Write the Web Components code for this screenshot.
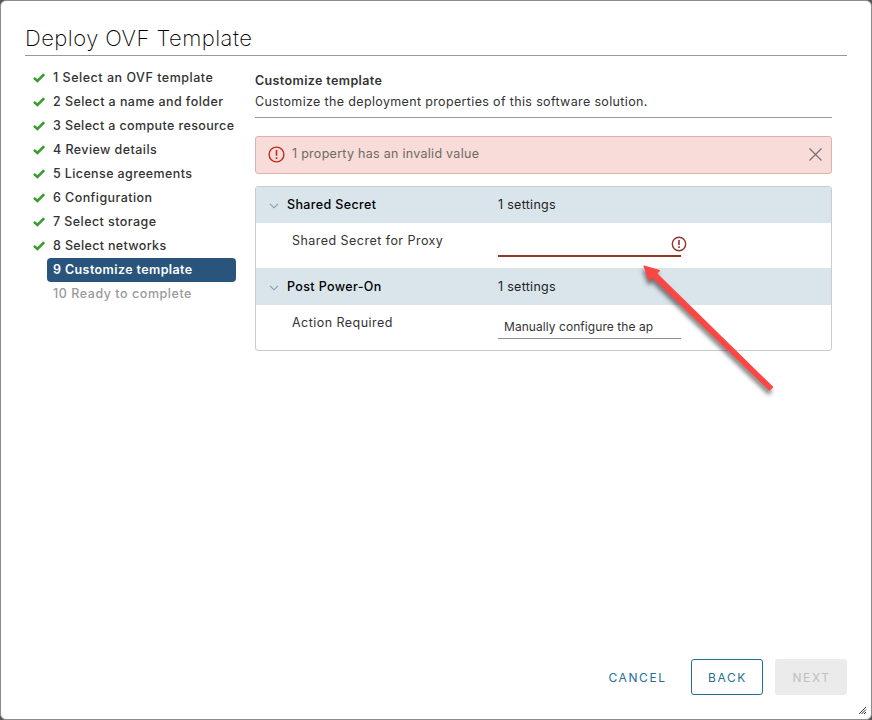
<!DOCTYPE html>
<html lang="en">
<head>
<meta charset="utf-8">
<title>Deploy OVF Template</title>
<style>
  html, body { margin: 0; height: 100%; }
  body {
    background: #555;
    color: #333;
    font: 12.5px/24px Inter, "Open Sans", sans-serif;
    overflow: hidden;
  }
</style>
</head>
<body>
<wizard-dialog heading="Deploy OVF Template">
  <wizard-step slot="steps" state="done" style="letter-spacing: .52px">1 Select an OVF template</wizard-step>
  <wizard-step slot="steps" state="done">2 Select a name and folder</wizard-step>
  <wizard-step slot="steps" state="done" style="letter-spacing: .38px">3 Select a compute resource</wizard-step>
  <wizard-step slot="steps" state="done">4 Review details</wizard-step>
  <wizard-step slot="steps" state="done" style="letter-spacing: .38px">5 License agreements</wizard-step>
  <wizard-step slot="steps" state="done">6 Configuration</wizard-step>
  <wizard-step slot="steps" state="done">7 Select storage</wizard-step>
  <wizard-step slot="steps" state="done" style="letter-spacing: .34px">8 Select networks</wizard-step>
  <wizard-step slot="steps" state="active" style="letter-spacing: .4px">9 Customize template</wizard-step>
  <wizard-step slot="steps" state="disabled" style="letter-spacing: .55px">10 Ready to complete</wizard-step>

  <page-header heading="Customize template">Customize the deployment properties of this software solution.</page-header>
  <alert-banner>1 property has an invalid value</alert-banner>
  <property-table>
    <property-section name="Shared Secret" count="1 settings">
      <property-row label="Shared Secret for Proxy" invalid></property-row>
    </property-section>
    <property-section name="Post Power-On" count="1 settings">
      <property-row label="Action Required">Manually configure the ap</property-row>
    </property-section>
  </property-table>

  <wizard-button slot="actions" kind="link">CANCEL</wizard-button>
  <wizard-button slot="actions" kind="outline">BACK</wizard-button>
  <wizard-button slot="actions" kind="disabled">NEXT</wizard-button>
</wizard-dialog>
<pointer-arrow></pointer-arrow>

<script>
function define(name, render) {
  customElements.define(name, class extends HTMLElement {
    constructor() {
      super();
      this.attachShadow({ mode: "open" });
    }

    connectedCallback() {
      this.shadowRoot.innerHTML = render(this);
    }
  });
}

define("wizard-dialog", (el) => `
  <style>
    :host {
      display: flex;
      flex-direction: column;
      box-sizing: border-box;
      width: 872px;
      height: 720px;
      padding: 22px 24px 24px;
      background: #fff;
      border: 1px solid #8c8c8c;
      border-radius: 6px;
    }
    h1 {
      margin: 0;
      height: 32px;
      border-bottom: 1px solid #9a9a9a;
      font-size: 22px;
      font-weight: 200;
      line-height: 30px;
      letter-spacing: .46px;
      color: #000;
    }
    .content { display: flex; flex: 1; }
    nav { width: 211px; padding-top: 10px; }
    main { width: 577px; margin-left: 19px; padding-top: 16px; }
    footer { display: flex; justify-content: flex-end; gap: 12px; }
    .grip { position: absolute; left: 858px; top: 706px; }
  </style>
  <h1>${el.getAttribute("heading")}</h1>
  <div class="content">
    <nav><slot name="steps"></slot></nav>
    <main><slot></slot></main>
  </div>
  <footer><slot name="actions"></slot></footer>
  <svg class="grip" width="9" height="9" viewBox="0 0 9 9" stroke="#333" stroke-width="1">
    <path d="M1 8 8 1M3.500 8 8 3.500M6 8l2-2"/>
  </svg>
`);

define("wizard-step", () => `
  <style>
    :host {
      display: grid;
      grid-template-columns: 22px 189px;
      align-items: center;
      height: 24px;
      font-weight: 500;
      letter-spacing: .43px;
      white-space: nowrap;
    }
    svg { display: none; margin-left: 8px; }
    :host([state="done"]) svg { display: block; }
    .label {
      grid-column: 2;
      box-sizing: border-box;
      height: 24px;
      padding-left: 6px;
      border-radius: 4px;
      line-height: 23px;
    }
    :host([state="active"]) .label { background: #29547b; color: #fff; font-weight: 600; }
    :host([state="disabled"]) .label { color: #9a9a9a; }
  </style>
  <svg width="12" height="10" viewBox="0 0 12 10" fill="none" stroke="#3c9a30" stroke-width="2.600">
    <path d="M.9 4.900 4.400 8 11.200 1.300"/>
  </svg>
  <span class="label"><slot></slot></span>
`);

define("page-header", (el) => `
  <style>
    :host { display: block; height: 45px; border-bottom: 1px solid #9a9a9a; }
    h2 { margin: 0; font-size: 12.5px; font-weight: 600; line-height: 18px; letter-spacing: .38px; }
    p { margin: 3px 0 0; line-height: 18px; letter-spacing: .35px; white-space: nowrap; }
  </style>
  <h2>${el.getAttribute("heading")}</h2>
  <p><slot></slot></p>
`);

define("alert-banner", () => `
  <style>
    :host {
      display: flex;
      align-items: center;
      box-sizing: border-box;
      height: 38px;
      margin-top: 18px;
      padding: 0 8px 0 12px;
      background: #f7dcd9;
      border: 1px solid #e0b2ab;
      border-radius: 3px;
      color: #6f6a64;
    }
    svg { margin-top: -2px; }
    .text { flex: 1; margin: -3px 0 0 7px; letter-spacing: .28px; }
  </style>
  <svg width="17" height="17" viewBox="0 0 17 17" fill="none" stroke="#c02b1d" stroke-width="1.400">
    <circle cx="8.500" cy="8.500" r="7.400"/><path d="M8.500 4v5.800M8.500 11.200v1.900" stroke-width="1.600"/>
  </svg>
  <span class="text"><slot></slot></span>
  <svg width="15" height="15" viewBox="0 0 15 15" stroke="#77706c" stroke-width="1.200">
    <path d="M1.500 1.500l12 12M13.500 1.500l-12 12"/>
  </svg>
`);

define("property-table", () => `
  <style>
    :host {
      display: block;
      box-sizing: border-box;
      height: 165px;
      margin-top: 12px;
      border: 1px solid #ccc;
      border-radius: 3px;
      overflow: hidden;
    }
  </style>
  <slot></slot>
`);

define("property-section", (el) => `
  <style>
    :host { display: block; height: 82px; }
    :host(:not(:first-child)) header { height: 37px; margin-top: -1px; }
    header {
      display: grid;
      grid-template-columns: 31px 211px 1fr;
      align-items: center;
      height: 36px;
      background: #d9e5ea;
      color: #222;
      letter-spacing: .29px;
      line-height: 22px;
    }
    svg { margin: 2px 0 0 13px; }
    .name { color: #000; font-weight: 500; letter-spacing: .37px; }
  </style>
  <header>
    <svg width="10" height="6" viewBox="0 0 10 6" fill="none" stroke="#8b9aa1" stroke-width="1.100">
      <path d="M1 .8 5 4.800 9 .8"/>
    </svg>
    <span class="name">${el.getAttribute("name")}</span>
    <span>${el.getAttribute("count")}</span>
  </header>
  <slot></slot>
`);

define("property-row", (el) => `
  <style>
    :host {
      display: grid;
      grid-template-columns: 206px 183px 20px;
      box-sizing: border-box;
      height: 46px;
      padding-left: 36px;
    }
    .label { padding-top: 6px; letter-spacing: .46px; }
    .field {
      box-sizing: border-box;
      height: 34px;
      padding: 10px 6px 0;
      border-bottom: 1px solid #8c8c8c;
      font-size: 12px;
      letter-spacing: .06px;
      white-space: nowrap;
    }
    :host([invalid]) .field { border-bottom: 2px solid #923526; }
    svg { display: none; margin: 13px 0 0 -10px; }
    :host([invalid]) svg { display: block; }
  </style>
  <span class="label">${el.getAttribute("label")}</span>
  <span class="field"><slot></slot></span>
  <svg width="16" height="16" viewBox="0 0 16 16" fill="none" stroke="#923526" stroke-width="1.400">
    <circle cx="8" cy="8" r="6.700"/><path d="M8 4v5M8 10.200v1.800" stroke-width="1.600"/>
  </svg>
`);

define("wizard-button", () => `
  <style>
    :host {
      display: flex;
      align-items: center;
      justify-content: center;
      box-sizing: border-box;
      width: 72px;
      height: 36px;
      border: 1px solid transparent;
      border-radius: 3px;
      color: #246f96;
      font-size: 12px;
      font-weight: 400;
      letter-spacing: 1.6px;
    }
    :host([kind="link"]) { width: 84px; }
    :host([kind="outline"]) { border-color: #246f96; }
    :host([kind="disabled"]) { background: #ebebeb; color: #bfbfbf; }
    span { margin: 2px -1px 0 0; }
  </style>
  <span><slot></slot></span>
`);

define("pointer-arrow", () => `
  <style>
    :host { position: absolute; left: 630px; top: 255px; }
    svg { display: block; filter: drop-shadow(-1px 4px 2px rgba(0, 0, 0, .5)); }
  </style>
  <svg width="160" height="150" viewBox="0 0 160 150" fill="#fb4744">
    <path d="M14 11 29.500 15.500 26.500 18.500 142.500 132 139.500 135 23 22.500 19.500 25.500Z"
          stroke="#fb4744" stroke-width="1.200" stroke-linejoin="round"/>
  </svg>
`);
</script>
</body>
</html>
